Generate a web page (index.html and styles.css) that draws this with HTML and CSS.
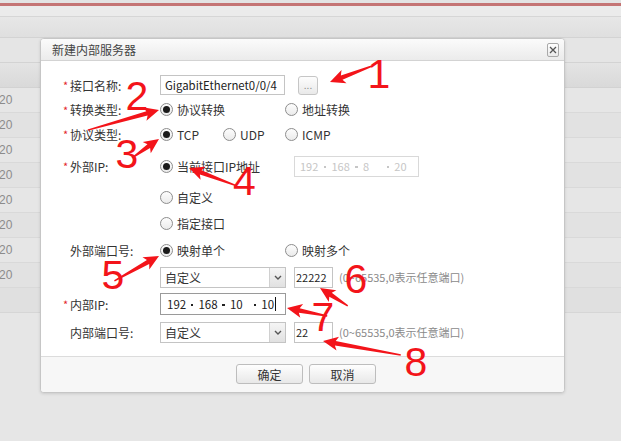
FILE: index.html
```html
<!DOCTYPE html>
<html lang="zh-CN">
<head>
  <meta charset="UTF-8">
  <title>新建内部服务器</title>
  <link rel="stylesheet" href="styles.css">
</head>
<body>
  <!-- Page behind the modal -->
  <div class="page">
    <div class="page__top"></div>
    <div class="page__accent"></div>
    <div class="page__nav"></div>
    <div class="page__tabs"></div>
    <div class="page__toolbar"></div>
    <div class="list">
      <div class="list__head"></div>
      <div class="list__row">20</div>
      <div class="list__row">20</div>
      <div class="list__row">20</div>
      <div class="list__row">20</div>
      <div class="list__row">20</div>
      <div class="list__row">20</div>
      <div class="list__row">20</div>
      <div class="list__row">20</div>
      <div class="list__foot"></div>
    </div>
  </div>

  <!-- Dialog -->
  <section class="dialog" role="dialog" aria-label="新建内部服务器">
    <header class="dialog__title">
      <span>新建内部服务器</span>
      <span class="dialog__close" aria-label="关闭">
        <svg width="8" height="8" viewBox="0 0 8 8"><path d="M1 1L7 7M7 1L1 7" stroke="#555" stroke-width="1.3"/></svg>
      </span>
    </header>

    <div class="dialog__body">
      <label class="form__label"><i class="form__req">*</i>接口名称:</label>
      <div class="form__ctrl">
        <div class="field">GigabitEthernet0/0/4</div>
        <button class="dots">...</button>
      </div>

      <label class="form__label"><i class="form__req">*</i>转换类型:</label>
      <div class="form__ctrl">
        <span class="choice"><i class="radio radio--on"></i>协议转换</span>
        <span class="choice"><i class="radio"></i>地址转换</span>
      </div>

      <label class="form__label"><i class="form__req">*</i>协议类型:</label>
      <div class="form__ctrl">
        <span class="choice choice--short"><i class="radio radio--on"></i>TCP</span>
        <span class="choice choice--mid"><i class="radio"></i>UDP</span>
        <span class="choice"><i class="radio"></i>ICMP</span>
      </div>

      <label class="form__label"><i class="form__req">*</i>外部IP:</label>
      <div class="form__ctrl">
        <span class="choice choice--wide"><i class="radio radio--on"></i>当前接口IP地址</span>
        <div class="ip ip--off">
          <span class="ip__seg">192</span><i class="ip__dot"></i>
          <span class="ip__seg">168</span><i class="ip__dot"></i>
          <span class="ip__seg">8</span><i class="ip__dot"></i>
          <span class="ip__seg">20</span>
        </div>
      </div>

      <span class="form__label"></span>
      <div class="form__ctrl">
        <span class="choice"><i class="radio"></i>自定义</span>
      </div>

      <span class="form__label"></span>
      <div class="form__ctrl">
        <span class="choice"><i class="radio"></i>指定接口</span>
      </div>

      <label class="form__label"><i class="form__req"></i>外部端口号:</label>
      <div class="form__ctrl">
        <span class="choice"><i class="radio radio--on"></i>映射单个</span>
        <span class="choice"><i class="radio"></i>映射多个</span>
      </div>

      <span class="form__label"></span>
      <div class="form__ctrl">
        <div class="select">
          <span class="select__value">自定义</span>
          <span class="select__arrow"><svg width="8" height="5" viewBox="0 0 8 5"><path d="M1 1L4 4L7 1" fill="none" stroke="#555" stroke-width="1.4"/></svg></span>
        </div>
        <div class="port">22222</div>
        <span class="hint">(0~65535,0表示任意端口)</span>
      </div>

      <label class="form__label"><i class="form__req">*</i>内部IP:</label>
      <div class="form__ctrl">
        <div class="ip ip--active">
          <span class="ip__seg">192</span><i class="ip__dot"></i>
          <span class="ip__seg">168</span><i class="ip__dot"></i>
          <span class="ip__seg">10</span><i class="ip__dot"></i>
          <span class="ip__seg">10<i class="ip__caret"></i></span>
        </div>
      </div>

      <label class="form__label"><i class="form__req"></i>内部端口号:</label>
      <div class="form__ctrl">
        <div class="select">
          <span class="select__value">自定义</span>
          <span class="select__arrow"><svg width="8" height="5" viewBox="0 0 8 5"><path d="M1 1L4 4L7 1" fill="none" stroke="#555" stroke-width="1.4"/></svg></span>
        </div>
        <div class="port">22</div>
        <span class="hint">(0~65535,0表示任意端口)</span>
      </div>
    </div>

    <footer class="dialog__footer">
      <button class="btn">确定</button>
      <button class="btn">取消</button>
    </footer>
  </section>

  <!-- Screenshot annotations drawn on top -->
  <svg class="marks" width="621" height="441" viewBox="0 0 621 441">
    <g fill="#f3141a">
      <polygon transform="translate(330 82) rotate(159.15)" points="0,0 -15,-7 -12.5,-2.3 -45,-0.7 -45,0.7 -12.5,2.3 -15,7"/>
      <polygon transform="translate(159 110) rotate(-15.73)" points="0,0 -15,-7 -12.5,-2.3 -74,-0.7 -74,0.7 -12.5,2.3 -15,7"/>
      <polygon transform="translate(159 139) rotate(-35.13)" points="0,0 -15,-7 -12.5,-2.3 -33,-0.7 -33,0.7 -12.5,2.3 -15,7"/>
      <polygon transform="translate(189 168) rotate(-159.44)" points="0,0 -15,-7 -12.5,-2.3 -51,-0.7 -51,0.7 -12.5,2.3 -15,7"/>
      <polygon transform="translate(159 256) rotate(-29.05)" points="0,0 -15,-7 -12.5,-2.3 -51,-0.7 -51,0.7 -12.5,2.3 -15,7"/>
      <polygon transform="translate(320 288) rotate(-147.26)" points="0,0 -15,-7 -12.5,-2.3 -33,-0.7 -33,0.7 -12.5,2.3 -15,7"/>
      <polygon transform="translate(287 308) rotate(-168.69)" points="0,0 -15,-7 -12.5,-2.3 -41,-0.7 -41,0.7 -12.5,2.3 -15,7"/>
      <polygon transform="translate(323 341) rotate(-169.82)" points="0,0 -15,-7 -12.5,-2.3 -79,-0.7 -79,0.7 -12.5,2.3 -15,7"/>
    </g>
    <g class="marks__num">
      <text x="367.5" y="88">1</text>
      <text x="125.5" y="110">2</text>
      <text x="115.5" y="168">3</text>
      <text x="233" y="195">4</text>
      <text x="101.5" y="289">5</text>
      <text x="344.5" y="293">6</text>
      <text x="311.5" y="331">7</text>
      <text x="404.5" y="376">8</text>
    </g>
  </svg>
</body>
</html>
```

FILE: styles.css
```css
/* Modal over a dimmed list page */
:root {
  --text: #333;
  --muted: #8a8a8a;
  --line: #c4c4c4;
  --req: #e3262b;
}
* { box-sizing: border-box; margin: 0; padding: 0; }
body {
  position: relative;
  width: 621px;
  height: 441px;
  overflow: hidden;
  background: #e6e6e6;
  font-family: "Noto Sans CJK SC", "Liberation Sans", sans-serif;
  font-size: 12px;
  color: var(--text);
}
i { font-style: normal; }

/* background page */
.page__top { height: 3px; background: #e3e3e3; }
.page__accent { height: 3px; background: #c47474; }
.page__nav { height: 11px; background: #ebebeb; border-bottom: 1px solid #d6d6d6; }
.page__tabs { height: 21px; background: linear-gradient(#e7e7e7, #dfdfdf); border-bottom: 1px solid #d3d3d3; }
.page__toolbar { height: 25px; background: #e5e5e5; border-bottom: 1px solid #d3d3d3; }
.list__head { height: 25px; background: linear-gradient(#e4e4e4, #d9d9d9); border-bottom: 1px solid #d2d2d2; }
.list__row {
  height: 25px;
  line-height: 24px;
  text-indent: -1px;
  border-bottom: 1px solid #d9d9d9;
  background: #e6e6e6;
  color: #8c8c8c;
  font-family: "Liberation Sans", sans-serif;
}
.list__row:nth-child(odd) { background: #e2e2e2; }
.list__foot { height: 25px; background: #e0e0e0; border-bottom: 1px solid #d6d6d6; }

/* dialog */
.dialog {
  position: absolute;
  left: 40px;
  top: 38px;
  width: 525px;
  height: 355px;
  display: flex;
  flex-direction: column;
  background: #fff;
  border: 1px solid #c6c6c6;
  border-radius: 4px;
  box-shadow: 0 1px 3px rgba(0, 0, 0, 0.12);
  overflow: hidden;
}
.dialog__title {
  flex: none;
  height: 22px;
  display: flex;
  align-items: center;
  justify-content: space-between;
  padding: 0 5px 0 11px;
  background: linear-gradient(#fbfbfb, #ebebeb);
  border-bottom: 1px solid #d3d3d3;
  color: #444;
}
.dialog__close {
  width: 12px;
  height: 14px;
  display: grid;
  place-items: center;
  border: 1px solid #a9a9a9;
  border-radius: 2px;
  background: linear-gradient(#fff, #eaeaea);
}
.dialog__body {
  flex: none;
  height: 295px;
  display: grid;
  grid-template-columns: 97px 1fr;
  grid-template-rows: 24px 25px 24px 40px 22px 30px 24px 30px 24px 32px;
  align-items: center;
  align-content: start;
  padding: 12px 0 0 22px;
}
.dialog__footer {
  flex: none;
  height: 36px;
  display: flex;
  justify-content: center;
  gap: 6px;
  padding: 7px 0 0 7px;
  background: #f7f7f7;
  border-top: 1px solid #dcdcdc;
}

/* form */
.form__label { display: flex; align-items: center; color: #333; }
.form__req { width: 7px; color: var(--req); font-size: 11px; }
.form__ctrl { display: flex; align-items: center; }

.field {
  width: 125px;
  height: 20px;
  display: flex;
  align-items: center;
  padding-left: 4px;
  border: 1px solid var(--line);
  color: #222;
  font-size: 11.4px;
}
.dots {
  width: 20px;
  height: 19px;
  margin-left: 13px;
  border: 1px solid #c6c6c6;
  border-radius: 3px;
  background: linear-gradient(#fdfdfd, #e9e9e9);
  color: #888;
  font: 10px "Liberation Sans", sans-serif;
  line-height: 18px;
}

.choice { display: flex; align-items: center; gap: 4px; width: 125px; color: #333; }
.choice--short { width: 63px; }
.choice--mid { width: 62px; }
.choice--wide { width: 134px; }
.radio {
  width: 13px;
  height: 13px;
  display: grid;
  place-items: center;
  border: 1px solid #8d8d8d;
  border-radius: 50%;
  background: linear-gradient(#fdfdfd, #ebebeb);
}
.radio--on::after {
  content: "";
  width: 7px;
  height: 7px;
  border-radius: 50%;
  background: #1b1b1b;
}

.ip {
  width: 125px;
  height: 21px;
  display: flex;
  align-items: center;
  padding-left: 5px;
  border: 1px solid #d9d9d9;
  font-size: 11px;
}
.ip__seg { width: 24px; display: flex; align-items: center; }
.ip__dot { width: 8px; display: flex; align-items: center; padding-top: 2px; }
.ip__dot::after { content: ""; width: 2.5px; height: 2.5px; background: currentColor; }
.ip--off { color: #c6c6c6; }
.ip--active {
  width: 126px;
  height: 22px;
  padding-left: 6px;
  border-color: #9a9a9a;
  color: #222;
  font-size: 11.5px;
}
.ip__caret { width: 1px; height: 14px; background: #111; margin-left: 1px; }

.select {
  width: 126px;
  height: 21px;
  display: flex;
  border: 1px solid var(--line);
}
.select__value { flex: 1; display: flex; align-items: center; padding-left: 4px; color: #333; }
.select__arrow {
  width: 16px;
  display: grid;
  place-items: center;
  border-left: 1px solid #d0d0d0;
  background: linear-gradient(#f5f5f5, #e1e1e1);
}
.port {
  width: 39px;
  height: 21px;
  margin-left: 8px;
  display: flex;
  align-items: center;
  padding-left: 1px;
  border: 1px solid var(--line);
  color: #222;
  font-size: 11px;
}
.hint { margin-left: 6px; color: var(--muted); font-size: 11px; }

.btn {
  width: 67px;
  height: 20px;
  border: 1px solid #bdbdbd;
  border-radius: 3px;
  background: linear-gradient(#fefefe, #e8e8e8);
  font: 12px "Noto Sans CJK SC", sans-serif;
  color: #333;
}

/* annotations */
.marks { position: absolute; left: 0; top: 0; pointer-events: none; }
.marks__num text {
  font-family: "Liberation Sans", sans-serif;
  font-size: 41px;
  fill: #f3141a;
}
```
